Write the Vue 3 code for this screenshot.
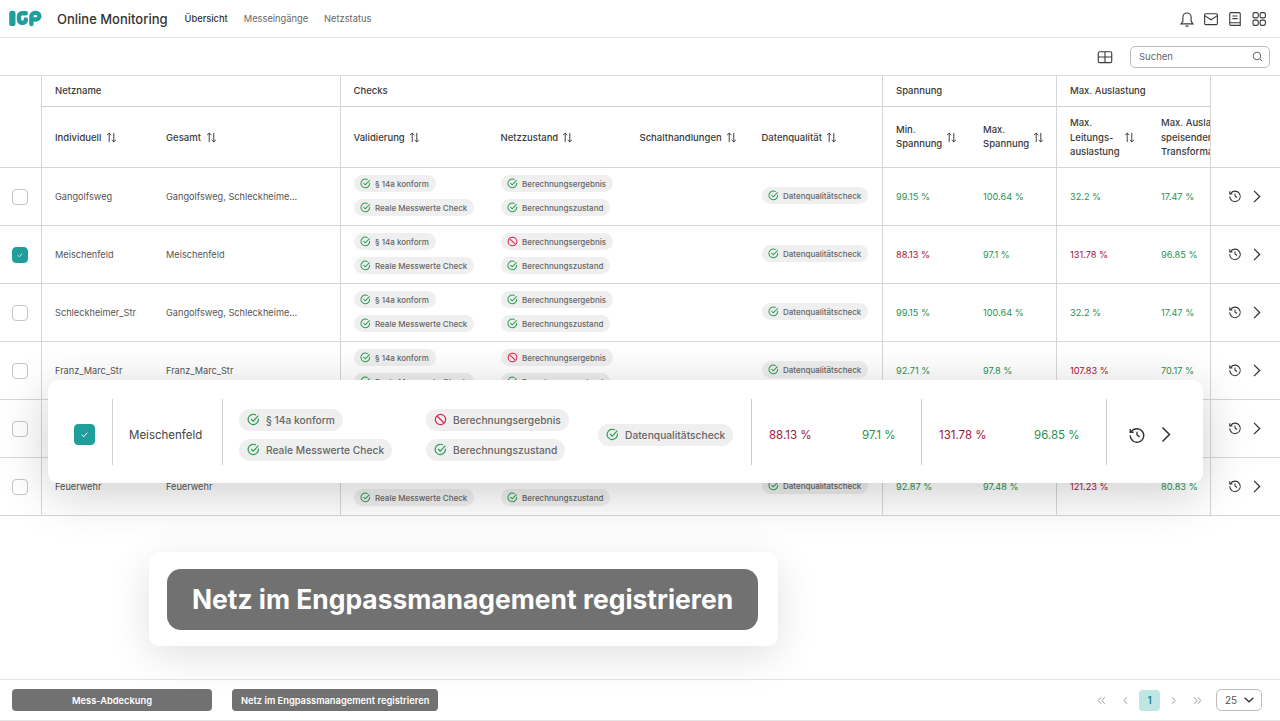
<template>
  <div class="page">
    <header class="topbar">
      <svg class="logo" width="33" height="17" viewBox="0 0 33 17">
        <rect x="0.2" y="0.8" width="6.3" height="15.200" rx="2.600" fill="#1f9e9b" />
        <path d="M16.800 3.200H13a3 3 0 0 0-3 3v3.600a3 3 0 0 0 3 3h1.200a2.600 2.600 0 0 0 2.600-2.600V9.500" fill="none" stroke="#1f9e9b" stroke-width="4.400" stroke-linecap="round" />
        <path d="M22.400 14V6.500a3.600 3.600 0 0 1 3.600-3.600h1a3.300 3.300 0 0 1 0 6.600h-1.500" fill="none" stroke="#1f9e9b" stroke-width="4.400" stroke-linecap="round" />
      </svg>
      <span class="app-name">Online Monitoring</span>
      <nav class="nav">
        <a class="nav-link active">Übersicht</a>
        <a class="nav-link">Messeingänge</a>
        <a class="nav-link">Netzstatus</a>
      </nav>
      <div class="top-icons">
        <svg viewBox="0 0 24 24" class="ticon"><path d="M6.500 15V9.500a5.500 5.500 0 0 1 11 0V15l2.500 3.500H4zM10 21.500h4" /></svg>
        <svg viewBox="0 0 24 24" class="ticon"><rect x="3.500" y="5" width="17" height="14.500" rx="1.500" /><path d="M3.500 7.500 12 13l8.500-5.500" /></svg>
        <svg viewBox="0 0 24 24" class="ticon"><path d="M5 5A1.500 1.500 0 0 1 6.500 3.500h11A1.500 1.500 0 0 1 19 5v15.500H6.500A1.500 1.500 0 0 1 5 19zM8.500 8h7M8.500 11.500h7M5 17h14" /></svg>
        <svg viewBox="0 0 24 24" class="ticon"><rect x="4" y="3.500" width="7" height="7" rx="2.200" /><rect x="13.500" y="3.500" width="7" height="7" rx="2.200" /><rect x="4" y="13.500" width="7" height="7" rx="2.200" /><rect x="13.500" y="13.500" width="7" height="7" rx="2.200" /></svg>
      </div>
    </header>

    <div class="toolbar">
      <svg viewBox="0 0 24 24" class="ticon"><rect x="3" y="5" width="18" height="14.500" rx="2" /><path d="M3 12h18M12 5v14.500" /></svg>
      <div class="search">
        <span>Suchen</span>
        <svg viewBox="0 0 24 24" class="search-icon"><circle cx="11" cy="11" r="7" /><path d="m16.500 16.500 4 4" /></svg>
      </div>
    </div>

    <main class="table">
      <div class="head">
        <div class="head-check"></div>
        <div class="group g-name">
          <div class="group-title">Netzname</div>
          <div class="subs">
            <div class="sub w-ind">Individuell <SortIcon /></div>
            <div class="sub w-ges">Gesamt <SortIcon /></div>
          </div>
        </div>
        <div class="group g-checks">
          <div class="group-title">Checks</div>
          <div class="subs">
            <div class="sub w-val">Validierung <SortIcon /></div>
            <div class="sub w-zus">Netzzustand <SortIcon /></div>
            <div class="sub w-sch">Schalthandlungen <SortIcon /></div>
            <div class="sub">Datenqualität <SortIcon /></div>
          </div>
        </div>
        <div class="group g-span">
          <div class="group-title">Spannung</div>
          <div class="subs">
            <div class="sub w-min"><span class="lines">Min.<br />Spannung</span> <SortIcon /></div>
            <div class="sub"><span class="lines">Max.<br />Spannung</span> <SortIcon /></div>
          </div>
        </div>
        <div class="group g-last">
          <div class="group-title">Max. Auslastung</div>
          <div class="subs">
            <div class="sub w-lei"><span class="lines tall">Max.<br />Leitungs-<br />auslastung</span> <SortIcon /></div>
            <div class="sub clip"><span class="lines tall">Max. Auslastung<br />speisender<br />Transformatoren</span></div>
          </div>
        </div>
        <div class="head-end"></div>
      </div>

      <div v-for="(row, i) in rows" :key="i" class="row">
        <div class="cell-check">
          <span class="box" :class="{ checked: row.checked }">
            <svg v-if="row.checked" viewBox="0 0 16 16"><path d="m5 8.200 2.200 2.200L11 6" /></svg>
          </span>
        </div>
        <div class="cell-name">
          <template v-if="row.name">
            <span class="w-ind">{{ row.name }}</span>
            <span class="w-ges ellipsis">{{ row.total }}</span>
          </template>
        </div>
        <div class="cell-checks">
          <template v-if="row.name">
            <div class="pills w-val">
              <Pill label="§ 14a konform" />
              <Pill label="Reale Messwerte Check" />
            </div>
            <div class="pills w-zus-sch">
              <Pill label="Berechnungsergebnis" :bad="row.bad" />
              <Pill label="Berechnungszustand" />
            </div>
            <div class="pills">
              <Pill label="Datenqualitätscheck" />
            </div>
          </template>
        </div>
        <div class="cell-span">
          <template v-if="row.name">
            <span class="w-min" :class="voltTone(row.min)">{{ row.min }} %</span>
            <span :class="voltTone(row.max)">{{ row.max }} %</span>
          </template>
        </div>
        <div class="cell-last">
          <template v-if="row.name">
            <span class="w-lei" :class="loadTone(row.line)">{{ row.line }} %</span>
            <span :class="loadTone(row.trafo)">{{ row.trafo }} %</span>
          </template>
        </div>
        <div class="cell-end">
          <HistoryIcon />
          <ChevronIcon />
        </div>
      </div>

      <!-- hervorgehobene Zeile liegt über der Tabelle -->
      <div class="focus-row">
        <div class="f-check">
          <span class="box big checked"><svg viewBox="0 0 16 16"><path d="m5 8.200 2.200 2.200L11 6" /></svg></span>
        </div>
        <div class="f-name">Meischenfeld</div>
        <div class="f-checks">
          <div class="f-pills f-val">
            <Pill big label="§ 14a konform" />
            <Pill big label="Reale Messwerte Check" />
          </div>
          <div class="f-pills f-zus">
            <Pill big bad label="Berechnungsergebnis" />
            <Pill big label="Berechnungszustand" />
          </div>
          <div class="f-pills">
            <Pill big label="Datenqualitätscheck" />
          </div>
        </div>
        <div class="f-vals f-span">
          <span class="bad f-w1">88.13 %</span>
          <span class="good">97.1 %</span>
        </div>
        <div class="f-vals f-last">
          <span class="bad f-w2">131.78 %</span>
          <span class="good">96.85 %</span>
        </div>
        <div class="f-end">
          <HistoryIcon big />
          <ChevronIcon big />
        </div>
      </div>

      <div class="callout">
        <div class="callout-btn">Netz im Engpassmanagement registrieren</div>
      </div>
    </main>

    <footer class="footer">
      <button class="btn btn-wide">Mess-Abdeckung</button>
      <button class="btn">Netz im Engpassmanagement registrieren</button>
      <div class="pager">
        <span class="pg"><svg viewBox="0 0 12 12"><path d="M5.500 2.500 2.500 6l3 3.500M9.500 2.500 6.500 6l3 3.500" /></svg></span>
        <span class="pg"><svg viewBox="0 0 12 12"><path d="M7.500 2.500 4.500 6l3 3.500" /></svg></span>
        <span class="pg current">1</span>
        <span class="pg"><svg viewBox="0 0 12 12"><path d="M4.500 2.500 7.500 6l-3 3.500" /></svg></span>
        <span class="pg"><svg viewBox="0 0 12 12"><path d="M2.500 2.500 5.500 6l-3 3.500M6.500 2.500 9.500 6l-3 3.500" /></svg></span>
        <div class="size">25
          <svg viewBox="0 0 16 16" width="14" height="14"><path d="m3 5.500 5 4.500 5-4.500" /></svg>
        </div>
      </div>
    </footer>
  </div>
</template>

<script setup>
import { h } from 'vue'

const SortIcon = () =>
  h('svg', { viewBox: '0 0 12 12', width: 11, height: 11, class: 'sort' }, [
    h('path', { d: 'M3.500 11V1.200M1.200 3.400 3.500 1.200l2.300 2.200M8.500 1v9.800M6.200 8.600l2.300 2.200 2.300-2.200' })
  ])

const HistoryIcon = props => {
  const size = props.big ? 18 : 14
  return h('svg', { viewBox: '0 0 24 24', width: size, height: size, class: 'act' }, [
    h('path', { d: 'M4.300 8A9 9 0 1 1 3 12.500M3 4v4.500h4.500M12 7.500V12l3.500 2.500' })
  ])
}
HistoryIcon.props = { big: Boolean }

const ChevronIcon = props => {
  const size = props.big ? 21 : 17
  return h('svg', { viewBox: '0 0 24 24', width: size, height: size, class: 'act' }, [
    h('path', { d: 'm8.500 4 8 8-8 8' })
  ])
}
ChevronIcon.props = { big: Boolean }

const Pill = props =>
  h('span', { class: ['pill', props.big ? 'pill-big' : ''] }, [
    props.bad
      ? h('svg', { viewBox: '0 0 24 24', class: 'pi red' }, [
          h('circle', { cx: 12, cy: 12, r: 9.5 }),
          h('path', { d: 'm5.500 5.500 13 13' })
        ])
      : h('svg', { viewBox: '0 0 24 24', class: 'pi green' }, [
          h('path', { d: 'M21 10.500A9.500 9.500 0 1 1 16.500 3.700' }),
          h('path', { d: 'm7.500 11 4 4 9.500-10' })
        ]),
    props.label
  ])
Pill.props = { label: String, bad: Boolean, big: Boolean }

const rows = [
  { name: 'Gangolfsweg', total: 'Gangolfsweg, Schleckheimer_Str', min: 99.15, max: 100.64, line: 32.2, trafo: 17.47 },
  { name: 'Meischenfeld', total: 'Meischenfeld', checked: true, bad: true, min: 88.13, max: 97.1, line: 131.78, trafo: 96.85 },
  { name: 'Schleckheimer_Str', total: 'Gangolfsweg, Schleckheimer_Str', min: 99.15, max: 100.64, line: 32.2, trafo: 17.47 },
  { name: 'Franz_Marc_Str', total: 'Franz_Marc_Str', bad: true, min: 92.71, max: 97.8, line: 107.83, trafo: 70.17 },
  // diese Zeile liegt komplett unter der hervorgehobenen Zeile
  {},
  { name: 'Feuerwehr', total: 'Feuerwehr', bad: true, min: 92.87, max: 97.48, line: 121.23, trafo: 80.83 }
]

const voltTone = v => (v < 90 ? 'bad' : 'good')
const loadTone = v => (v > 100 ? 'bad' : 'good')
</script>

<style>
html, body { margin: 0; background: #fff; }
</style>

<style scoped>
.page {
  width: 1280px;
  height: 721px;
  display: flex;
  flex-direction: column;
  overflow: hidden;
  font-family: Inter, "Liberation Sans", sans-serif;
  color: #3a3a3a;
  background: #fff;
}

.topbar {
  height: 37px;
  flex: none;
  display: flex;
  align-items: center;
  padding: 0 12px 0 9px;
  border-bottom: 1px solid #e6e6e6;
}
.logo { flex: none; margin-right: 15px; }
.app-name { font-size: 13px; font-weight: 500; color: #333; margin-right: 17px; white-space: nowrap; }
.nav { display: flex; gap: 16px; font-size: 9.300px; }
.nav-link { color: #666; white-space: nowrap; }
.nav-link.active { color: #333; font-weight: 500; }
.top-icons { margin-left: auto; display: flex; gap: 6px; }
.ticon { width: 18px; height: 18px; fill: none; stroke: #3a3a3a; stroke-width: 1.500; flex: none; }

.toolbar {
  height: 37px;
  flex: none;
  display: flex;
  align-items: center;
  justify-content: flex-end;
  gap: 16px;
  padding-right: 10px;
}
.search {
  width: 140px;
  height: 22px;
  box-sizing: border-box;
  border: 1px solid #bdbdbd;
  border-radius: 5px;
  display: flex;
  align-items: center;
  justify-content: space-between;
  padding: 0 5px 0 8px;
  font-size: 9.500px;
  color: #666;
}
.search-icon { width: 13px; height: 13px; fill: none; stroke: #555; stroke-width: 1.700; }

.table { position: relative; flex: 1; min-height: 0; border-top: 1px solid #dcdcdc; }

.head { display: flex; height: 91px; border-bottom: 1px solid #d6d6d6; }
.head-check { width: 41px; border-right: 1px solid #d6d6d6; flex: none; }
.head-end { flex: 1; }
.group { flex: none; border-right: 1px solid #d6d6d6; display: flex; flex-direction: column; overflow: hidden; }
.g-name { width: 298px; }
.g-checks { width: 541px; }
.g-span { width: 173px; }
.g-last { width: 153px; }
.group-title {
  height: 29px;
  padding-bottom: 1px;
  flex: none;
  display: flex;
  align-items: center;
  padding-left: 13px;
  font-size: 9.500px;
  font-weight: 500;
  border-bottom: 1px solid #cfcfcf;
}
.subs { flex: 1; display: flex; align-items: center; padding-left: 13px; }
.g-checks .subs, .g-checks .group-title { padding-left: 12.500px; }
.sub { display: flex; align-items: center; gap: 3px; font-size: 9.500px; font-weight: 500; white-space: nowrap; flex: none; }
.g-name .sub { gap: 4px; }
.lines { line-height: 14.500px; }
.lines.tall { padding-top: 2px; }
.clip { width: 50px; overflow: hidden; }
.w-ind { width: 111px; flex: none; }
.w-ges { width: 135px; flex: none; }
.w-val { width: 147px; flex: none; }
.w-zus { width: 139px; }
.w-sch { width: 122px; }
.w-zus-sch { width: 261px; flex: none; }
.w-min { width: 87px; flex: none; }
.w-lei { width: 91px; flex: none; }
.sub :deep(.sort) { fill: none; stroke: #333; stroke-width: 1; margin-left: 1px; flex: none; }

.row { display: flex; height: 58px; box-sizing: border-box; border-bottom: 1px solid #d6d6d6; font-size: 9.200px; color: #555; }
.row > div { flex: none; display: flex; align-items: center; border-right: 1px solid #d6d6d6; }
.cell-check { width: 40px; padding-right: 1px; justify-content: center; }
.cell-name { width: 285px; padding-left: 13px; }
.cell-checks { width: 528px; padding-left: 13px; padding-bottom: 2px; }
.cell-span { width: 160px; padding-left: 13px; }
.cell-last { width: 140px; padding-left: 13px; }
.row > .cell-end { flex: 1; border-right: 0; justify-content: center; gap: 6px; padding: 0 0 1px 2px; }
.ellipsis { white-space: nowrap; overflow: hidden; text-overflow: ellipsis; width: 132px; }

.box {
  width: 14px;
  height: 14px;
  border: 1px solid #c4c4c4;
  border-radius: 4px;
  display: flex;
  align-items: center;
  justify-content: center;
  background: #fff;
  flex: none;
}
.box svg { width: 12px; height: 12px; fill: none; stroke: #fff; stroke-width: 1; }
.box.checked { background: #1f9e9b; border-color: #1f9e9b; }
.box.big { width: 19px; height: 19px; }
.box.big svg { width: 15px; height: 15px; }

.pills { display: flex; flex-direction: column; align-items: flex-start; gap: 7px; }
.pills :deep(.pill) {
  display: inline-flex;
  align-items: center;
  gap: 4px;
  height: 17px;
  padding: 0 7px 0 6px;
  border-radius: 9px;
  background: #efefef;
  color: #666;
  font-size: 8px;
  font-weight: 500;
  white-space: nowrap;
}
.pills :deep(.pi), .f-pills :deep(.pi) { width: 11px; height: 11px; fill: none; stroke-width: 2.200; flex: none; }
:deep(.pi.green) { stroke: #2a9d54; }
:deep(.pi.red) { stroke: #d9264f; }

.good { color: #2a9150; }
.bad { color: #a3123a; }
:deep(.act) { fill: none; stroke: #333; stroke-width: 1.800; }

.focus-row {
  position: absolute;
  left: 48px;
  top: 304px;
  width: 1155px;
  height: 103px;
  background: #fff;
  border-radius: 10px;
  box-shadow: 0 10px 50px rgba(0, 0, 0, 0.2);
  display: flex;
  align-items: center;
  font-size: 12px;
}
/* Trennlinien sitzen mittig, der Inhalt etwas tiefer */
.focus-row > div { height: 66px; padding-top: 6px; display: flex; align-items: center; flex: none; box-sizing: border-box; }
.f-check { width: 65px; padding-left: 26px; border-right: 1px solid #d0d0d0; }
.f-name { width: 110px; padding-left: 16px; border-right: 1px solid #d0d0d0; color: #444; font-size: 11.500px; }
.f-checks { width: 529px; padding-left: 16px; border-right: 1px solid #c8c8c8; }
.f-val { width: 187px; }
.f-zus { width: 172px; }
.f-pills { display: flex; flex-direction: column; align-items: flex-start; gap: 8px; flex: none; }
.f-pills :deep(.pill) {
  display: inline-flex;
  align-items: center;
  gap: 6px;
  height: 22px;
  padding: 0 8px 0 8px;
  border-radius: 11px;
  background: #efefef;
  color: #666;
  font-size: 10.250px;
  font-weight: 500;
  white-space: nowrap;
}
.f-pills :deep(.pi) { width: 13px; height: 13px; }
.f-vals { font-size: 11.500px; padding-left: 17px; }
.f-span { width: 170px; border-right: 1px solid #c8c8c8; }
.f-last { width: 185px; border-right: 1px solid #c8c8c8; }
.f-w1 { width: 93px; }
.f-w2 { width: 95px; }
.focus-row > .f-end { flex: 1; gap: 9px; padding-left: 21px; }

.callout {
  position: absolute;
  left: 149px;
  top: 476px;
  width: 629px;
  height: 94px;
  box-sizing: border-box;
  padding: 17px 20px 16px 18px;
  background: #fff;
  border-radius: 10px;
  box-shadow: 0 10px 40px rgba(0, 0, 0, 0.12);
}
.callout-btn {
  height: 61px;
  box-sizing: border-box;
  padding-bottom: 2px;
  background: #717171;
  border-radius: 14px;
  color: #fff;
  font-size: 26.400px;
  font-weight: 700;
  display: flex;
  align-items: center;
  justify-content: center;
  white-space: nowrap;
}

.footer {
  height: 40px;
  flex: none;
  display: flex;
  align-items: center;
  gap: 20px;
  padding: 0 18px 0 12px;
  border-top: 1px solid #e4e4e4;
  border-bottom: 1px solid #e4e4e4;
}
.btn {
  height: 22px;
  padding: 0 9px;
  background: #717171;
  color: #fff;
  border: 0;
  border-radius: 4px;
  font-family: inherit;
  font-size: 9.300px;
  font-weight: 600;
  white-space: nowrap;
}
.btn-wide { width: 200px; }
.pager { margin-left: auto; display: flex; align-items: center; gap: 3px; font-size: 10px; color: #999; }
.pg { width: 21px; height: 21px; display: flex; align-items: center; justify-content: center; }
.pg svg { width: 11px; height: 11px; fill: none; stroke: #8f8f8f; stroke-width: 1; }
.pg.current { background: #bde6e5; color: #1f8583; border-radius: 4px; font-size: 10px; font-weight: 600; }
.size {
  width: 31px;
  height: 20px;
  margin-left: 5px;
  border: 1px solid #bdbdbd;
  border-radius: 5px;
  display: flex;
  align-items: center;
  justify-content: space-between;
  padding: 0 5px 0 8px;
  color: #555;
}
.size svg { fill: none; stroke: #333; stroke-width: 1.500; }
</style>
